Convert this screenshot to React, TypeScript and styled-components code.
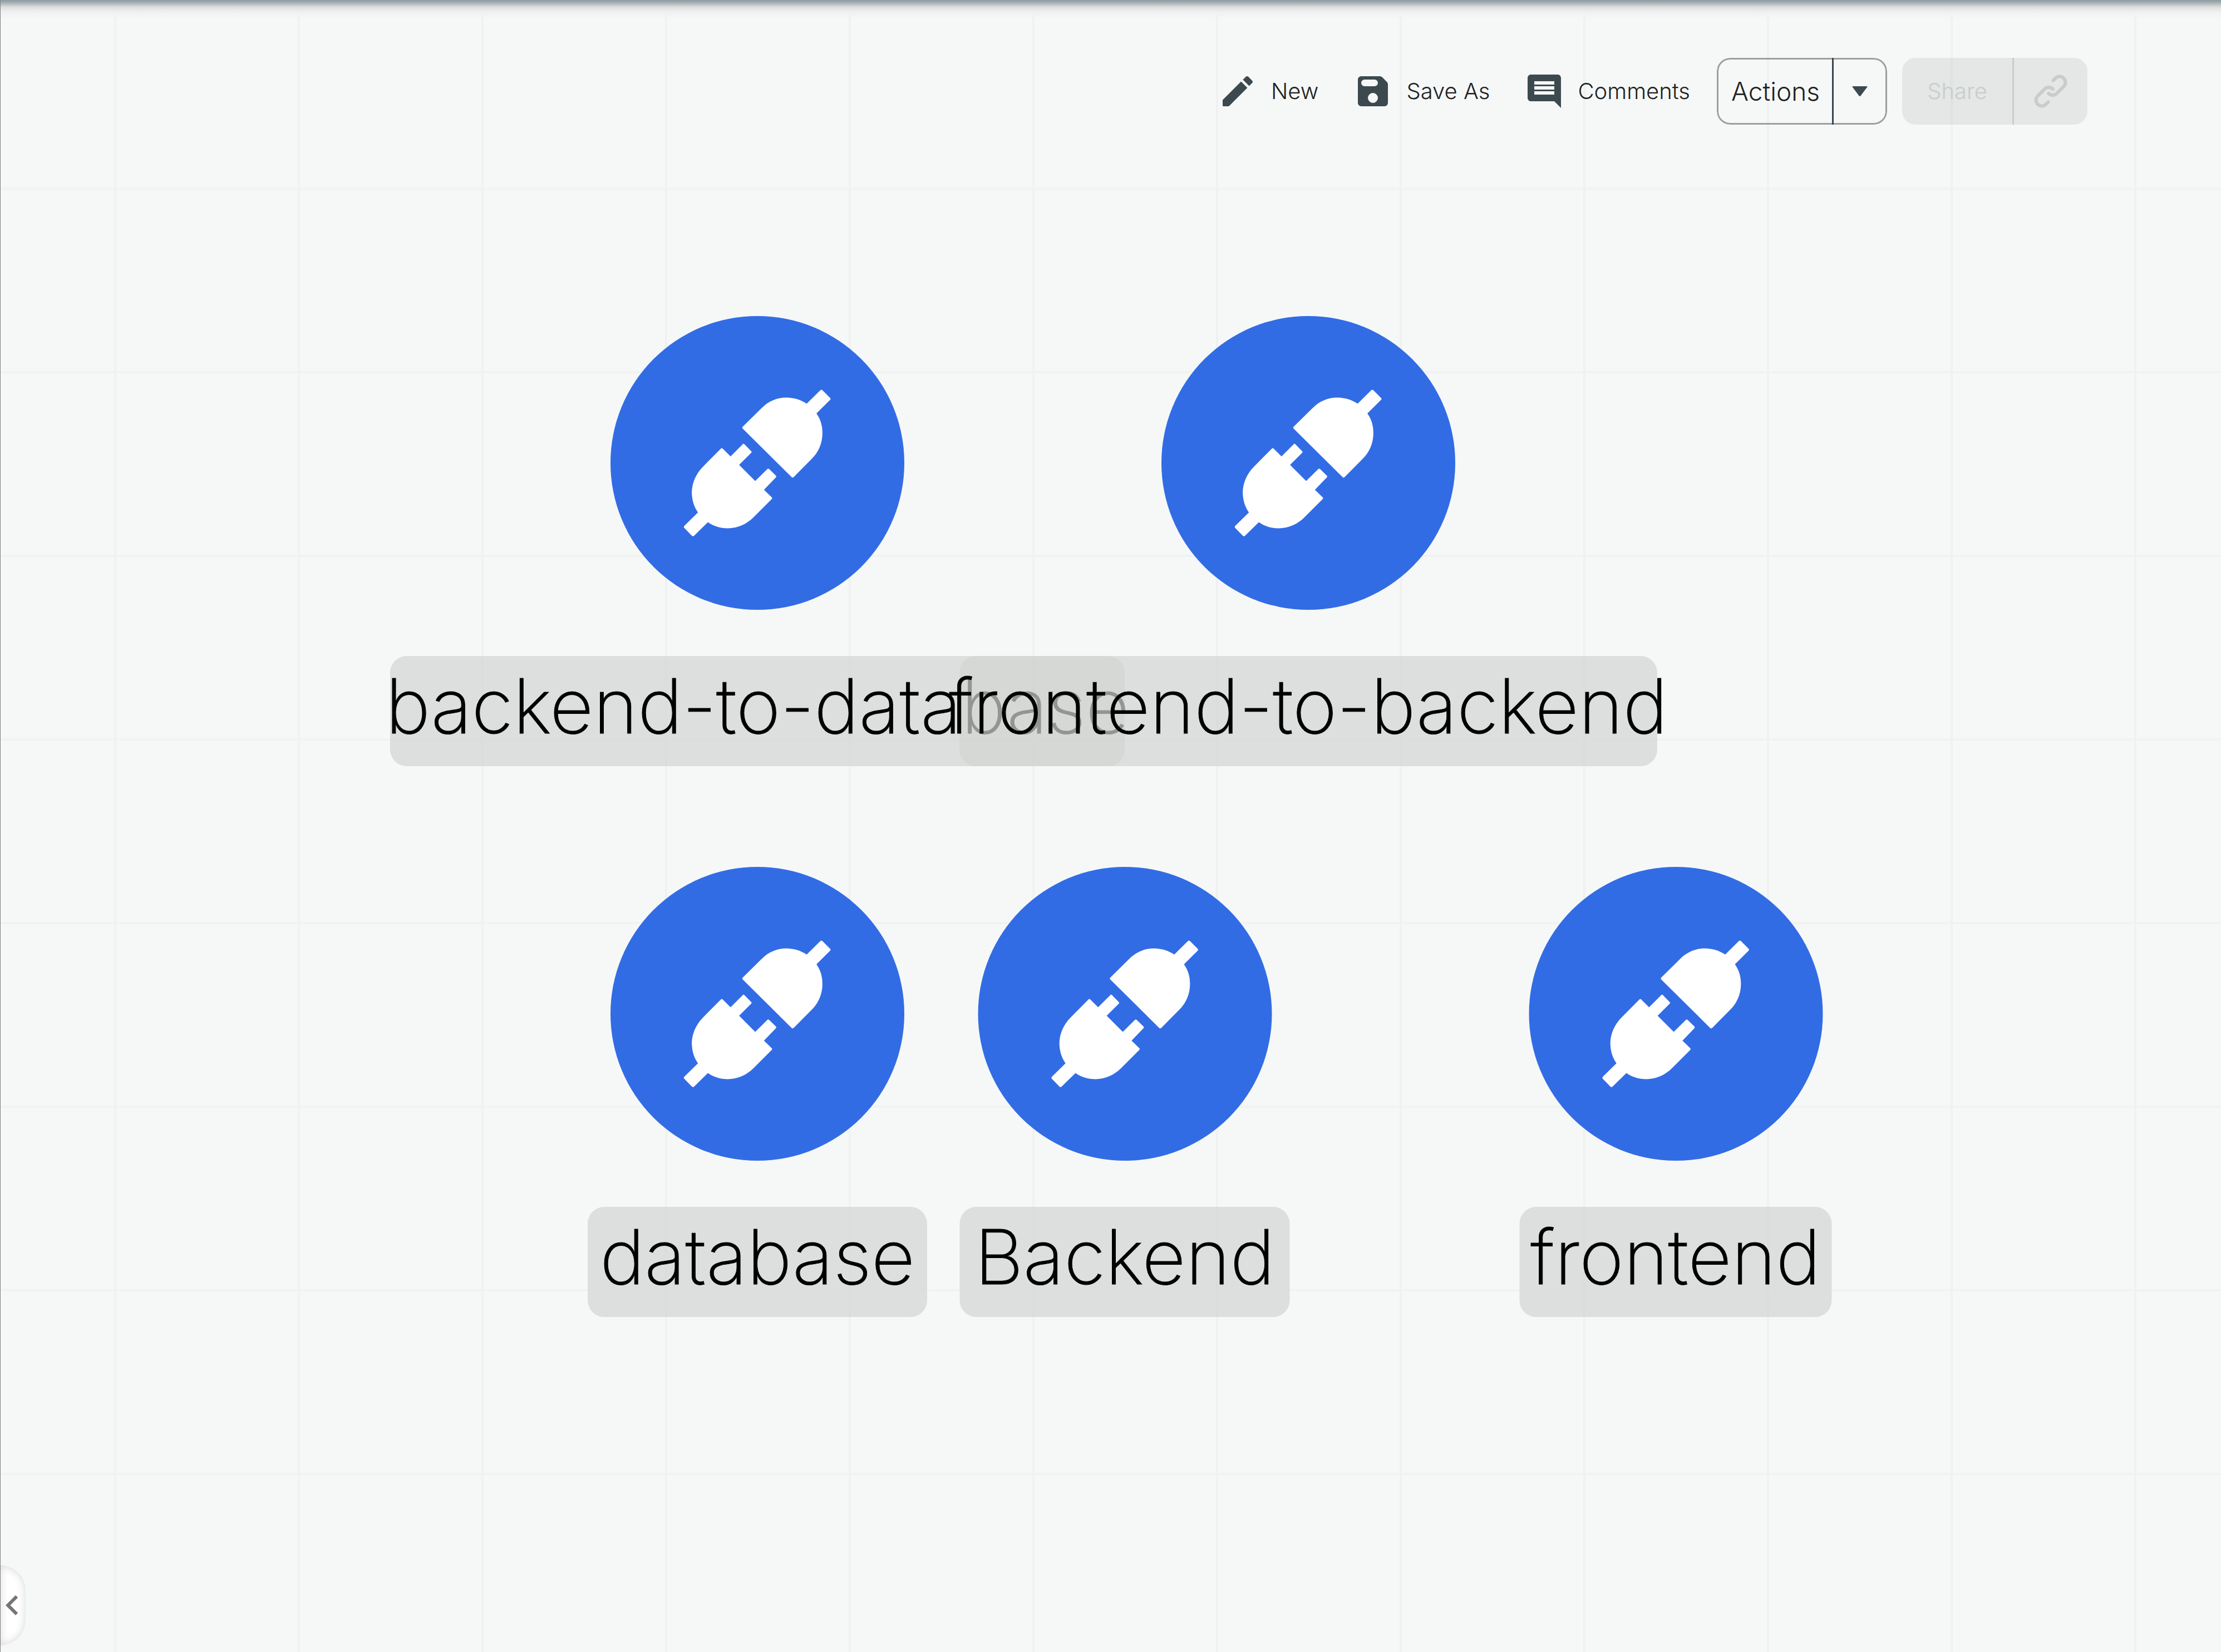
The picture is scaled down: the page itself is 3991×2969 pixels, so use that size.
import React from "react";
import styled, { createGlobalStyle } from "styled-components";

const GlobalStyle = createGlobalStyle`
  *, *::before, *::after { box-sizing: border-box; }
  body {
    margin: 0;
    background: #f5f8f7;
    color: #212121;
    font-family: Inter, "Liberation Sans", sans-serif;
    font-weight: 300;
  }
  button {
    margin: 0;
    padding: 0;
    border: 0;
    background: none;
    color: inherit;
    font: inherit;
    cursor: pointer;
  }
`;

const Page = styled.div`
  position: relative;
  display: flex;
  flex-direction: column;
  min-height: 100vh;
  overflow: hidden;
  border-left: 1px solid #808080;
  background-color: #f5f8f7;
  background-image:
    linear-gradient(90deg, #f0f2f2 4px, transparent 4px),
    linear-gradient(180deg, #f1f3f3 4px, transparent 4px);
  background-size: 330px 330px;
  background-position: 204px 7px;
`;

const TopShade = styled.div`
  position: absolute;
  inset: 0 0 auto 0;
  height: 34px;
  background: linear-gradient(
    180deg,
    #8b9ba1 0,
    #9ba7ab 3px,
    #bcc1c3 8px,
    #d9dbdb 12px,
    #e7e9e9 17px,
    #f1f3f3 23px,
    rgba(245, 248, 247, 0) 34px
  );
`;

const Toolbar = styled.header`
  position: relative;
  z-index: 2;
  display: flex;
  justify-content: flex-end;
  align-items: center;
  padding: 104px 240px 0 0;
`;

const Tools = styled.nav`
  display: flex;
  gap: 62px;
  margin-right: 48px;
`;

const ToolButton = styled.button`
  display: flex;
  align-items: center;
  gap: 24px;
  font-size: 40px;
  line-height: 48px;
  white-space: nowrap;
`;

const ToolIcon = styled.svg`
  display: block;
  width: 72px;
  height: 72px;
  fill: #3c4a4f;
`;

const SplitButton = styled.div`
  display: flex;
  height: 120px;
  border-radius: 24px;
  overflow: hidden;
`;

const ActionsSplit = styled(SplitButton)`
  position: relative;
  margin-right: 27px;

  &::after {
    content: "";
    position: absolute;
    inset: 0;
    z-index: -1;
    border: 3px solid #9e9e9e;
    border-radius: 24px;
  }
`;

const ShareSplit = styled(SplitButton)`
  background: rgba(0, 0, 0, 0.065);
`;

const ActionsMain = styled.button`
  width: 207px;
  padding-left: 4px;
  font-size: 46px;
  line-height: 56px;
  text-align: center;
`;

const ActionsMenu = styled.button`
  display: flex;
  align-items: center;
  justify-content: center;
  width: 99px;
  padding-right: 2px;
  border-left: 3px solid #3c4650;
`;

const ShareMain = styled.button`
  width: 198px;
  color: #c9cccb;
  font-size: 40px;
  line-height: 48px;
`;

const ShareLink = styled.button`
  display: flex;
  align-items: center;
  justify-content: center;
  width: 135px;
  border-left: 3px solid #c9cccb;
`;

const Canvas = styled.main`
  position: absolute;
  inset: 0;
`;

const Node = styled.figure<{ $x: number; $y: number }>`
  position: absolute;
  left: ${(p) => p.$x}px;
  top: ${(p) => p.$y}px;
  display: flex;
  flex-direction: column;
  align-items: center;
  gap: 83px;
  margin: 0;
  transform: translateX(-50%);
`;

const Disc = styled.div`
  width: 528px;
  height: 528px;
  border-radius: 50%;
  background: #326ce5;
`;

const PlugSvg = styled.svg`
  display: block;
  width: 100%;
  height: 100%;
  fill: #fff;
`;

const Label = styled.figcaption<{ $width: number }>`
  display: flex;
  justify-content: center;
  align-items: center;
  width: ${(p) => p.$width}px;
  height: 198px;
  padding-bottom: 18px;
  border-radius: 30px;
  background: rgba(210, 212, 209, 0.7);
  color: #000;
  font-size: 136px;
  font-weight: 200;
  line-height: 160px;
  white-space: nowrap;
  -webkit-text-stroke: 1px #000;
`;

const CollapseTab = styled.button`
  position: absolute;
  left: -1px;
  bottom: 12px;
  z-index: 2;
  display: flex;
  align-items: center;
  width: 46px;
  height: 144px;
  padding-left: 10px;
  border-radius: 0 46px 46px 0;
  background: #fff;
  box-shadow: inset 0 0 16px #d6d6d6;
`;

const nodes = [
  { name: "backend-to-database", x: 1360, y: 568, width: 1320 },
  { name: "frontend-to-backend", x: 2350, y: 568, width: 1254 },
  { name: "database", x: 1360, y: 1558, width: 610 },
  { name: "Backend", x: 2020, y: 1558, width: 593 },
  { name: "frontend", x: 3010, y: 1558, width: 561 },
];

function Plug() {
  return (
    <PlugSvg viewBox="48 51 1478 1478" aria-hidden="true">
      <path d="M713 617Q709 612 713 608L808 514C842 480 885 461 932 461C975 462 1005 472 1035 492L1103 425Q1108 420 1114 424L1153 463Q1157 468 1153 472L1084 541C1104 570 1114 600 1114 640C1114 690 1095 735 1060 770L970 861Q965 866 960 862Z" />
      <path d="M419 1107L488 1039C468 1010 458 980 457 938C458 890 478 845 512 810L602 719Q608 713 614 719L652 757L713 696Q717 691 722 696L756 731Q760 735 756 739L695 800L776 881L837 821Q841 816 846 821L880 854Q884 859 880 863L820 925L859 963Q863 968 859 972L768 1063C733 1098 690 1118 638 1119C600 1118 570 1110 538 1088L468 1157Q463 1161 458 1157L419 1117Q415 1112 419 1107Z" />
    </PlugSvg>
  );
}

export default function App() {
  return (
    <>
      <GlobalStyle />
      <Page>
        <TopShade />
        <Toolbar>
          <Tools>
            <ToolButton type="button">
              <ToolIcon viewBox="0 0 24 24" aria-hidden="true">
                <path d="M3 17.46v3.04c0 .28.22.5.5.5h3.04c.13 0 .26-.05.35-.15L17.81 9.94l-3.75-3.75L3.15 17.1c-.1.1-.15.22-.15.36zM20.71 7.04c.39-.39.39-1.02 0-1.41l-2.34-2.34c-.39-.39-1.02-.39-1.41 0l-1.83 1.83 3.75 3.75 1.83-1.83z" />
              </ToolIcon>
              New
            </ToolButton>
            <ToolButton type="button">
              <ToolIcon viewBox="0 0 24 24" aria-hidden="true">
                <path
                  fillRule="evenodd"
                  d="M5 3H16.2Q17 3 17.6 3.6L20.4 6.4Q21 7 21 7.8V19a2 2 0 0 1-2 2H5a2 2 0 0 1-2-2V5a2 2 0 0 1 2-2ZM7 5a2 2 0 0 0 0 4h6a2 2 0 0 0 0-4ZM12 13a3 3 0 1 0 0 6a3 3 0 1 0 0-6Z"
                />
              </ToolIcon>
              Save As
            </ToolButton>
            <ToolButton type="button">
              <ToolIcon viewBox="0 0 24 24" aria-hidden="true">
                <path d="M21.99 4c0-1.1-.89-2-1.99-2H4c-1.1 0-2 .9-2 2v12c0 1.1.9 2 2 2h14l4 4-.01-18zM18 14H6v-2h12v2zm0-3H6V9h12v2zm0-3H6V6h12v2z" />
              </ToolIcon>
              Comments
            </ToolButton>
          </Tools>
          <ActionsSplit>
            <ActionsMain type="button">Actions</ActionsMain>
            <ActionsMenu type="button" aria-label="More actions">
              <svg width="28" height="18" viewBox="0 0 28 18" fill="#3c4a4f" aria-hidden="true">
                <path d="M1.5 0H26.5Q28 0 27.2 1.6L15.4 17.2Q14 18.8 12.6 17.2L.8 1.6Q0 0 1.5 0Z" />
              </svg>
            </ActionsMenu>
          </ActionsSplit>
          <ShareSplit>
            <ShareMain type="button" disabled>
              Share
            </ShareMain>
            <ShareLink type="button" disabled aria-label="Copy link">
              <svg
                width="60"
                height="60"
                viewBox="0 0 60 60"
                fill="none"
                stroke="#c9cccb"
                strokeWidth="6"
                strokeLinecap="round"
                aria-hidden="true"
              >
                <path d="M34.5 10.7L39.1 6.1A10.5 10.5 0 0 1 53.9 20.9L40.9 33.9A10.5 10.5 0 0 1 26.1 33.9" />
                <path d="M25.5 49.3L20.9 53.9A10.5 10.5 0 0 1 6.1 39.1L19.1 26.1A10.5 10.5 0 0 1 33.9 26.1" />
              </svg>
            </ShareLink>
          </ShareSplit>
        </Toolbar>
        <Canvas>
          {nodes.map((node) => (
            <Node key={node.name} $x={node.x} $y={node.y}>
              <Disc>
                <Plug />
              </Disc>
              <Label $width={node.width}>{node.name}</Label>
            </Node>
          ))}
        </Canvas>
        <CollapseTab type="button" aria-label="Collapse panel">
          <svg width="24" height="36" viewBox="8 6 8 12" fill="#757575" aria-hidden="true">
            <path d="M15.41 7.41L14 6l-6 6 6 6 1.41-1.41L10.83 12z" />
          </svg>
        </CollapseTab>
      </Page>
    </>
  );
}
